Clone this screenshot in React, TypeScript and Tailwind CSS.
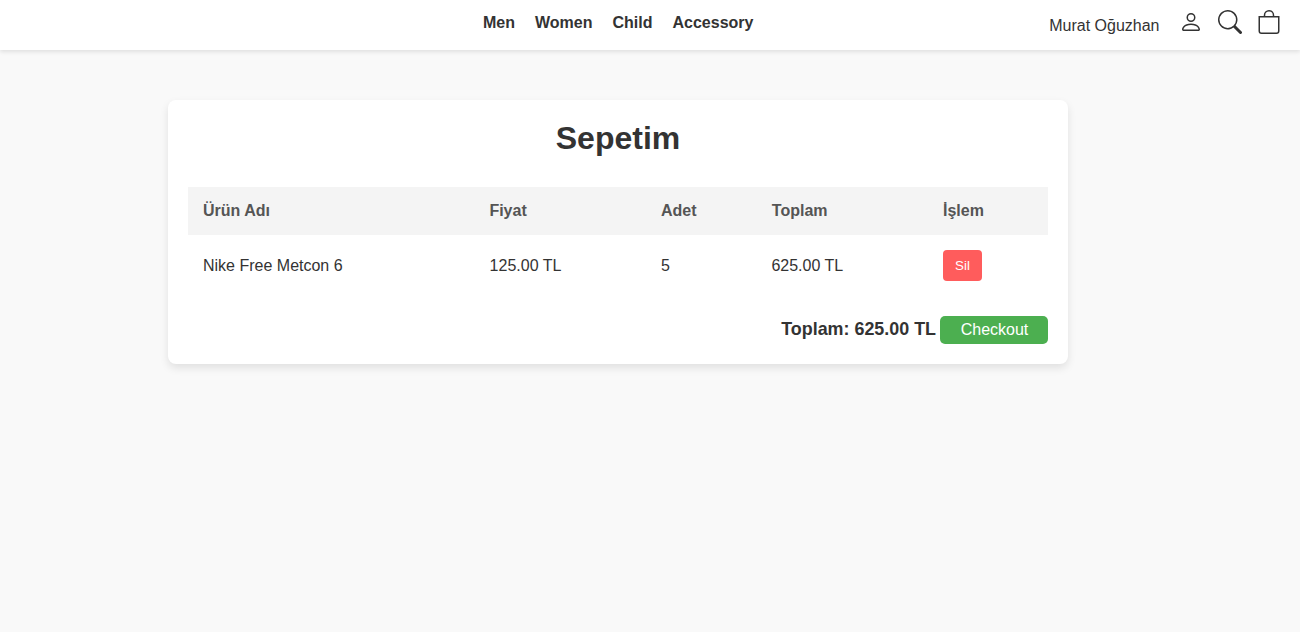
import { BsPerson, BsSearch, BsBag } from "react-icons/bs";

const links = ["Men", "Women", "Child", "Accessory"];
const columns = ["Ürün Adı", "Fiyat", "Adet", "Toplam", "İşlem"];

function Header() {
  return (
    <header className="grid h-[50px] grid-cols-[483px_1fr_auto] bg-white pr-[19px] shadow-[0_2px_4px_rgba(0,0,0,0.1)]">
      <nav className="col-start-2 flex gap-5 pt-[14px] text-base leading-[18px] font-bold">
        {links.map((link) => (
          <a key={link} href="#">{link}</a>
        ))}
      </nav>
      <div className="flex items-start">
        <span className="mr-[19.5px] pt-[17px] text-base leading-[18px]">Murat Oğuzhan</span>
        <BsPerson className="mt-[10px] mr-[15px] size-6" />
        <BsSearch className="mt-[10px] mr-[15px] size-6" />
        <BsBag className="mt-[10px] size-6" />
      </div>
    </header>
  );
}

function Cart() {
  return (
    <main className="mt-[50px] ml-[168px] h-[264px] w-[900px] rounded-lg bg-white p-5 shadow-[0_4px_8px_rgba(0,0,0,0.1)]">
      <h1 className="mb-[30px] text-center text-[32px] leading-[37px] font-bold">Sepetim</h1>
      <table className="w-full table-fixed border-collapse text-left text-base leading-[18px]">
        <colgroup>
          <col className="w-[286px]" />
          <col className="w-[172px]" />
          <col className="w-[110px]" />
          <col className="w-[172px]" />
          <col className="w-[120px]" />
        </colgroup>
        <thead>
          <tr className="h-12 bg-[#f4f4f4] text-[#555]">
            {columns.map((column) => (
              <th key={column} className="px-[15px] font-bold nth-2:pl-[15.4px] nth-4:pl-[15.8px]">{column}</th>
            ))}
          </tr>
        </thead>
        <tbody>
          <tr className="h-[61px]">
            <td className="px-[15px]">Nike Free Metcon 6</td>
            <td className="pl-[15.6px]">125.00 TL</td>
            <td className="px-[15px]">5</td>
            <td className="pl-[15.4px]">625.00 TL</td>
            <td className="px-[15px]">
              <button className="block h-[31px] w-[39px] rounded bg-[#ff5c5c] text-[13.333px] text-white">Sil</button>
            </td>
          </tr>
        </tbody>
      </table>
      <div className="mt-5 flex justify-end gap-1">
        <span className="pt-[3px] text-[17.9px] leading-5 font-bold">Toplam: 625.00 TL</span>
        <button className="h-7 w-[108px] rounded-[5px] bg-[#4caf50] pl-px text-base leading-[18px] text-white">Checkout</button>
      </div>
    </main>
  );
}

export default function App() {
  return (
    <div className="min-h-screen bg-[#f9f9f9] font-['Liberation_Sans',Arial,sans-serif] text-[#333]">
      <Header />
      <Cart />
    </div>
  );
}
